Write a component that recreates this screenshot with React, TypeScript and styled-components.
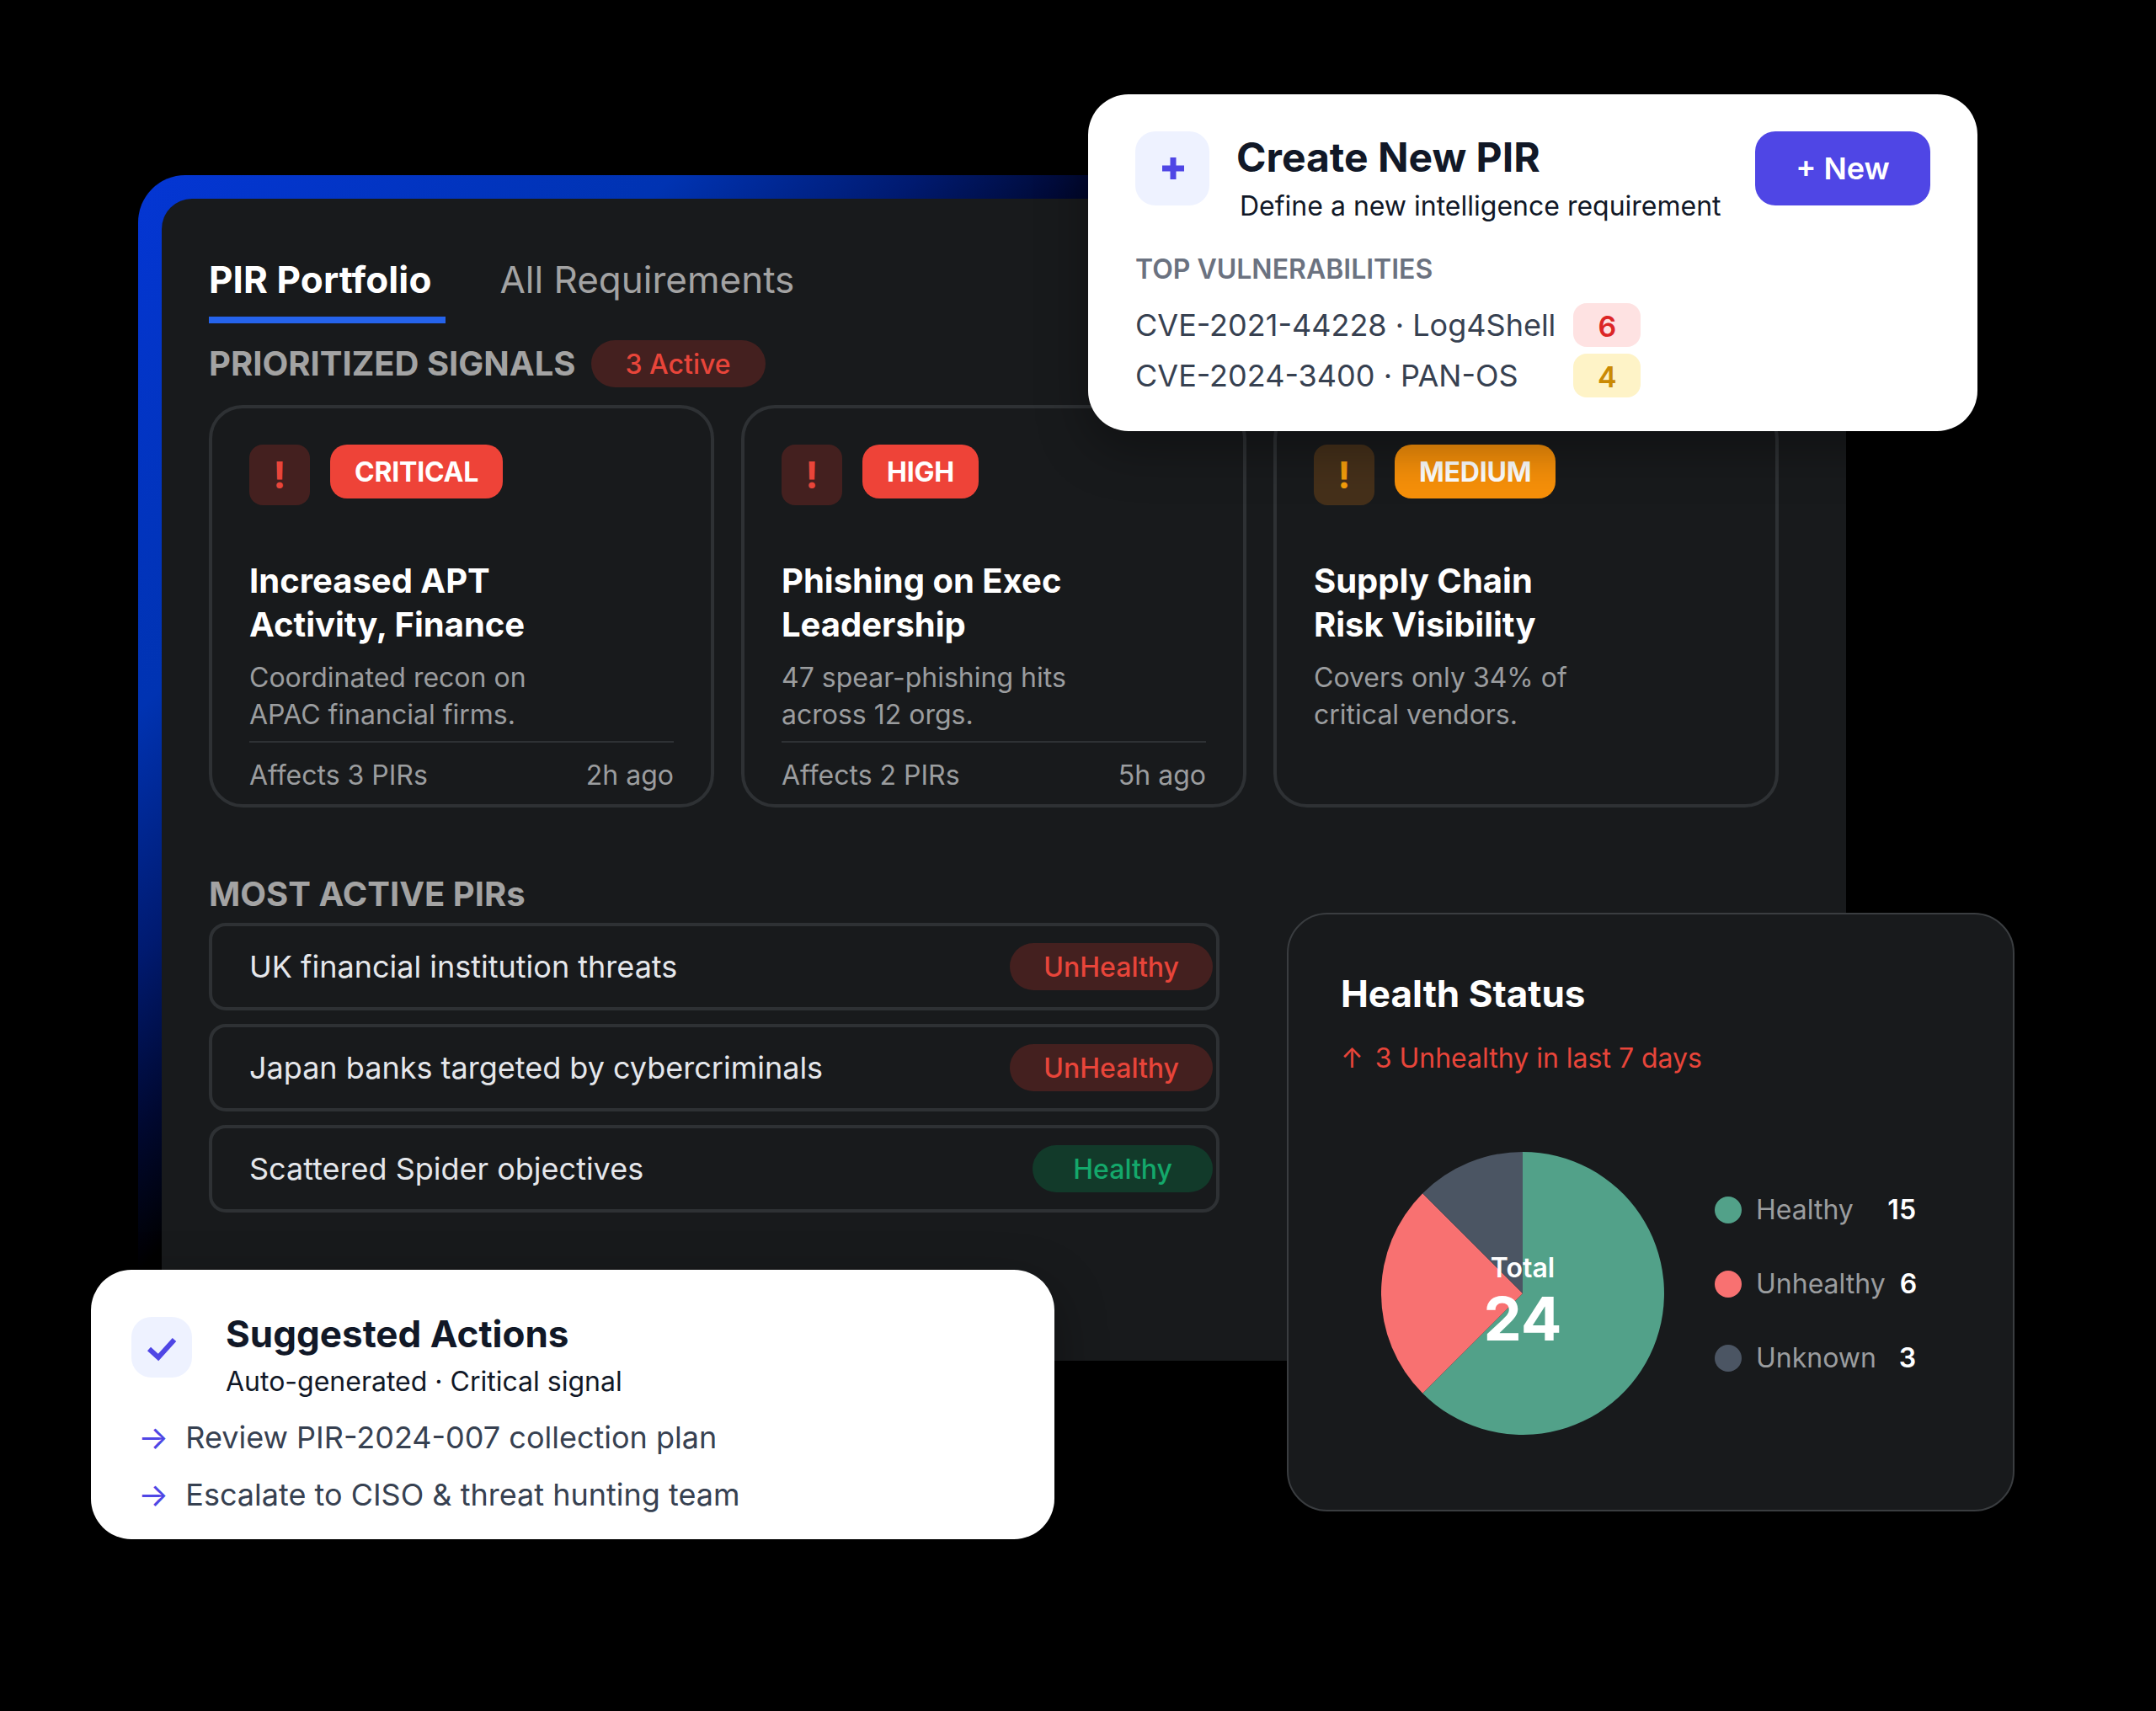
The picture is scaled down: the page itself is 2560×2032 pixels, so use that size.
import styled, { createGlobalStyle } from 'styled-components';

const GlobalStyle = createGlobalStyle`
  html, body { margin: 0; padding: 0; background: #000; }
  body { font-family: Inter, "Liberation Sans", sans-serif; }
`

type Tone = 'red' | 'orange' | 'green';

const toneText: Record<Tone, string> = { red: '#e8453a', orange: '#f59e0b', green: '#14a86b' };
const toneBadge: Record<Tone, string> = { red: '#ee4338', orange: '#f79009', green: '#14a86b' };
const toneIcon: Record<Tone, string> = { red: '#44201f', orange: '#45301a', green: '#123a2a' };

const Stage = styled.div`
  position: relative;
  width: 2560px;
  height: 2032px;
  padding: 208px 0 0 164px;
  box-sizing: border-box;
  background: #000;
  overflow: hidden;
`

const Frame = styled.div`
  width: 2028px;
  height: 1408px;
  padding: 28px 0 0 28px;
  box-sizing: border-box;
  border-radius: 56px 0 0 0;
  background: linear-gradient(135deg, #0436d4 0%, #0033b2 18.5%, #001a70 27%, #000830 33%, #000 38%);
`

const Panel = styled.div`
  height: 100%;
  padding: 69px 80px 0 56px;
  box-sizing: border-box;
  border-radius: 36px 0 0 0;
  background: #181a1c;
`

const Tabs = styled.div`
  display: flex;
  gap: 64px;
`

const Tab = styled.div<{ $active?: boolean }>`
  padding-right: ${p => (p.$active ? '17px' : '0')};
  padding-bottom: 17px;
  border-bottom: 8px solid ${p => (p.$active ? '#2563eb' : 'transparent')};
  font-size: 44px;
  line-height: 54px;
  font-weight: ${p => (p.$active ? 700 : 400)};
  letter-spacing: ${p => (p.$active ? '0.1px' : '0')};
  color: ${p => (p.$active ? '#fff' : '#a3a3a3')};
`

const SectionRow = styled.div`
  display: flex;
  align-items: center;
  gap: 18px;
  margin-top: 20px;
`

const SectionTitle = styled.div`
  font-size: 40px;
  line-height: 48px;
  font-weight: 700;
  color: #a3a3a3;
`

const ActivePill = styled.div`
  height: 56px;
  padding: 0 41px;
  display: flex;
  align-items: center;
  border-radius: 28px;
  background: #44201f;
  color: #e8453a;
  font-size: 32px;
  font-weight: 500;
`

const CardGrid = styled.div`
  display: grid;
  grid-template-columns: repeat(3, 600px);
  gap: 32px;
  margin-top: 21px;
`

const SignalCard = styled.div`
  height: 478px;
  padding: 43px 44px 0;
  box-sizing: border-box;
  border: 4px solid #2e3134;
  border-radius: 40px;
`

const CardHead = styled.div`
  display: flex;
  align-items: flex-start;
  gap: 24px;
`

const AlertIcon = styled.div<{ $tone: Tone }>`
  width: 72px;
  height: 72px;
  display: flex;
  align-items: center;
  justify-content: center;
  border-radius: 16px;
  background: ${p => toneIcon[p.$tone]};
  color: ${p => toneText[p.$tone]};
  font-size: 44px;
  font-weight: 700;
`

const Severity = styled.div<{ $tone: Tone }>`
  height: 64px;
  padding: 0 29px;
  display: flex;
  align-items: center;
  border-radius: 20px;
  background: ${p => toneBadge[p.$tone]};
  color: #fff;
  font-size: 32px;
  font-weight: 700;
  letter-spacing: -0.2px;
`

const CardTitle = styled.div`
  margin-top: 64px;
  font-size: 40px;
  line-height: 52px;
  font-weight: 700;
  color: #fff;
  white-space: pre-line;
`

const CardText = styled.div`
  margin-top: 15px;
  font-size: 32px;
  line-height: 44px;
  color: #9b9d9f;
  white-space: pre-line;
`

const CardFooter = styled.div`
  display: flex;
  justify-content: space-between;
  margin-top: 9px;
  padding-top: 17px;
  border-top: 2px solid #2e3134;
  font-size: 32px;
  line-height: 44px;
  color: #9b9d9f;
`

const ActiveTitle = styled(SectionTitle)`
  margin-top: 79px;
`

const PirList = styled.div`
  display: flex;
  flex-direction: column;
  gap: 16px;
  width: 1200px;
  margin-top: 10px;
`

const PirRow = styled.div`
  height: 104px;
  padding: 0 4px 0 44px;
  box-sizing: border-box;
  display: flex;
  align-items: center;
  justify-content: space-between;
  border: 4px solid #2e3134;
  border-radius: 20px;
  font-size: 36px;
  color: #e5e7eb;
`

const StatusPill = styled.div<{ $tone: Tone }>`
  height: 56px;
  padding: 0 ${p => (p.$tone === 'green' ? '48px' : '40px')};
  display: flex;
  align-items: center;
  border-radius: 28px;
  background: ${p => toneIcon[p.$tone]};
  color: ${p => toneText[p.$tone]};
  font-size: 32px;
  font-weight: 500;
`

const WhiteCard = styled.div`
  position: absolute;
  box-sizing: border-box;
  border-radius: 48px;
  background: #fff;
  box-shadow: 0 20px 60px rgba(0, 0, 0, 0.35);
  color: #111827;
`

const CreateCard = styled(WhiteCard)`
  left: 1292px;
  top: 112px;
  width: 1056px;
  height: 400px;
  padding: 44px 56px 40px;
`

const CreateHead = styled.div`
  display: flex;
  align-items: flex-start;
  gap: 32px;
`

const IconTile = styled.div<{ $size: number }>`
  flex: none;
  width: ${p => p.$size}px;
  height: ${p => p.$size}px;
  display: flex;
  align-items: center;
  justify-content: center;
  border-radius: 24px;
  background: #eef2ff;
`

const PlusTile = styled(IconTile)`
  padding-left: 2px;
  box-sizing: border-box;
`

const CreateText = styled.div`
  flex: 1;
  padding-top: 5px;
`

const CardHeading = styled.div`
  font-size: 48px;
  line-height: 52px;
  font-weight: 700;
  color: #111827;
`

const CreateSub = styled.div`
  margin: 10px 0 0 4px;
  font-size: 32px;
  line-height: 44px;
  white-space: nowrap;
`

const NewButton = styled.div`
  flex: none;
  width: 208px;
  height: 88px;
  display: flex;
  align-items: center;
  justify-content: center;
  border-radius: 24px;
  background: #4f46e5;
  color: #fff;
  font-size: 36px;
  font-weight: 600;
`

const VulnTitle = styled.div`
  margin-top: 33px;
  font-size: 32px;
  line-height: 40px;
  font-weight: 600;
  color: #6b7280;
`

const VulnGrid = styled.div`
  display: grid;
  grid-template-columns: max-content 80px;
  align-items: center;
  column-gap: 21px;
  row-gap: 8px;
  margin-top: 20px;
  font-size: 36px;
  color: #374151;
`

const CountBadge = styled.div<{ $tone: 'red' | 'yellow' }>`
  height: 52px;
  padding-top: 2px;
  box-sizing: border-box;
  display: flex;
  align-items: center;
  justify-content: center;
  border-radius: 16px;
  background: ${p => (p.$tone === 'red' ? '#fee2e2' : '#fef3c7')};
  color: ${p => (p.$tone === 'red' ? '#dc2626' : '#ca8a04')};
  font-size: 34px;
  font-weight: 600;
`

const ActionsCard = styled(WhiteCard)`
  left: 108px;
  top: 1508px;
  width: 1144px;
  height: 320px;
  padding: 52px 48px 30px;
`

const ActionsHead = styled.div`
  display: flex;
  align-items: flex-start;
  gap: 40px;
`

const ActionsIcon = styled(IconTile)`
  margin-top: 4px;
`

const ActionsHeading = styled(CardHeading)`
  font-size: 44px;
  line-height: 48px;
`

const ActionsSub = styled.div`
  margin-top: 13px;
  font-size: 32px;
  line-height: 40px;
`

const ActionList = styled.div`
  display: flex;
  flex-direction: column;
  gap: 24px;
  margin-top: 24px;
`

const ActionItem = styled.div`
  display: flex;
  align-items: center;
  gap: 20px;
  padding-left: 8px;
  font-size: 36px;
  line-height: 44px;
  color: #374151;
`

const ActionArrow = styled.span`
  font-size: 38px;
  color: #4f46e5;
`

const HealthCard = styled.div`
  position: absolute;
  left: 1528px;
  top: 1084px;
  width: 864px;
  height: 711px;
  padding: 66px 62px 0;
  box-sizing: border-box;
  border: 2px solid #3a3d40;
  border-radius: 48px;
  background: #181a1c;
`

const HealthTitle = styled.div`
  font-size: 44px;
  line-height: 56px;
  font-weight: 700;
  color: #fff;
`

const HealthTrend = styled.div`
  margin-top: 27px;
  font-size: 32px;
  line-height: 44px;
  color: #e8453a;
`

const TrendArrow = styled.span`
  margin-right: 5px;
`

const ChartRow = styled.div`
  display: flex;
  align-items: center;
  gap: 60px;
  margin: 89px 0 0 48px;
`

const PieWrap = styled.div`
  position: relative;
  width: 336px;
  height: 336px;
  flex: none;
`

const PieCenter = styled.div`
  position: absolute;
  left: 0;
  right: 0;
  top: 120px;
  text-align: center;
  color: #fff;
`

const PieLabel = styled.div`
  font-size: 32px;
  line-height: 36px;
  font-weight: 600;
`

const PieTotal = styled.div`
  font-size: 72px;
  line-height: 84px;
  font-weight: 700;
`

const Legend = styled.div`
  display: flex;
  flex-direction: column;
  gap: 44px;
  width: 239px;
  margin-bottom: 22px;
  font-size: 32px;
  line-height: 44px;
`

const LegendRow = styled.div`
  display: flex;
  align-items: center;
  gap: 17px;
`

const LegendDot = styled.div<{ $color: string }>`
  flex: none;
  width: 32px;
  height: 32px;
  border-radius: 50%;
  background: ${p => p.$color};
`

const LegendName = styled.div`
  color: #9b9d9f;
`

const LegendValue = styled.div`
  margin-left: auto;
  color: #fff;
  font-weight: 600;
`

const signals = [
  { tone: 'red' as Tone, level: 'CRITICAL', title: 'Increased APT\nActivity, Finance', text: 'Coordinated recon on\nAPAC financial firms.', affects: 'Affects 3 PIRs', age: '2h ago' },
  { tone: 'red' as Tone, level: 'HIGH', title: 'Phishing on Exec\nLeadership', text: '47 spear-phishing hits\nacross 12 orgs.', affects: 'Affects 2 PIRs', age: '5h ago' },
  { tone: 'orange' as Tone, level: 'MEDIUM', title: 'Supply Chain\nRisk Visibility', text: 'Covers only 34% of\ncritical vendors.' },
]

const pirs = [
  { name: 'UK financial institution threats', status: 'UnHealthy', tone: 'red' as Tone },
  { name: 'Japan banks targeted by cybercriminals', status: 'UnHealthy', tone: 'red' as Tone },
  { name: 'Scattered Spider objectives', status: 'Healthy', tone: 'green' as Tone },
]

const legend = [
  { name: 'Healthy', value: 15, color: '#52a189' },
  { name: 'Unhealthy', value: 6, color: '#f87171' },
  { name: 'Unknown', value: 3, color: '#4b5563' },
]

export default function App() {
  return (
    <Stage>
      <GlobalStyle />
      <Frame>
        <Panel>
          <Tabs>
            <Tab $active>PIR Portfolio</Tab>
            <Tab>All Requirements</Tab>
          </Tabs>
          <SectionRow>
            <SectionTitle>PRIORITIZED SIGNALS</SectionTitle>
            <ActivePill>3 Active</ActivePill>
          </SectionRow>
          <CardGrid>
            {signals.map(s => (
              <SignalCard key={s.level}>
                <CardHead>
                  <AlertIcon $tone={s.tone}>!</AlertIcon>
                  <Severity $tone={s.tone}>{s.level}</Severity>
                </CardHead>
                <CardTitle>{s.title}</CardTitle>
                <CardText>{s.text}</CardText>
                {s.affects && (
                  <CardFooter>
                    <span>{s.affects}</span>
                    <span>{s.age}</span>
                  </CardFooter>
                )}
              </SignalCard>
            ))}
          </CardGrid>
          <ActiveTitle>MOST ACTIVE PIRs</ActiveTitle>
          <PirList>
            {pirs.map(p => (
              <PirRow key={p.name}>
                <span>{p.name}</span>
                <StatusPill $tone={p.tone}>{p.status}</StatusPill>
              </PirRow>
            ))}
          </PirList>
        </Panel>
      </Frame>

      <CreateCard>
        <CreateHead>
          <PlusTile $size={88}>
            <svg width="28" height="28" viewBox="0 0 28 28">
              <path d="M14 1v26M1 14h26" stroke="#4f46e5" strokeWidth="7" fill="none" />
            </svg>
          </PlusTile>
          <CreateText>
            <CardHeading>Create New PIR</CardHeading>
            <CreateSub>Define a new intelligence requirement</CreateSub>
          </CreateText>
          <NewButton>+ New</NewButton>
        </CreateHead>
        <VulnTitle>TOP VULNERABILITIES</VulnTitle>
        <VulnGrid>
          <span>CVE-2021-44228 · Log4Shell</span>
          <CountBadge $tone="red">6</CountBadge>
          <span>CVE-2024-3400 · PAN-OS</span>
          <CountBadge $tone="yellow">4</CountBadge>
        </VulnGrid>
      </CreateCard>

      <ActionsCard>
        <ActionsHead>
          <ActionsIcon $size={72}>
            <svg width="40" height="40" viewBox="0 0 40 40">
              <path d="M5 22l11 10L35 11" stroke="#4f46e5" strokeWidth="6" fill="none" />
            </svg>
          </ActionsIcon>
          <div>
            <ActionsHeading>Suggested Actions</ActionsHeading>
            <ActionsSub>Auto-generated · Critical signal</ActionsSub>
          </div>
        </ActionsHead>
        <ActionList>
          <ActionItem><ActionArrow>→</ActionArrow>Review PIR-2024-007 collection plan</ActionItem>
          <ActionItem><ActionArrow>→</ActionArrow>Escalate to CISO & threat hunting team</ActionItem>
        </ActionList>
      </ActionsCard>

      <HealthCard>
        <HealthTitle>Health Status</HealthTitle>
        <HealthTrend><TrendArrow>↑</TrendArrow> 3 Unhealthy in last 7 days</HealthTrend>
        <ChartRow>
          <PieWrap>
            <svg width="336" height="336" viewBox="0 0 336 336">
              <path d="M168 168V0A168 168 0 1 1 49.2 286.8Z" fill="#52a189" />
              <path d="M168 168L49.2 286.8A168 168 0 0 1 49.2 49.2Z" fill="#f87171" />
              <path d="M168 168L49.2 49.2A168 168 0 0 1 168 0Z" fill="#4b5563" />
            </svg>
            <PieCenter>
              <PieLabel>Total</PieLabel>
              <PieTotal>24</PieTotal>
            </PieCenter>
          </PieWrap>
          <Legend>
            {legend.map(l => (
              <LegendRow key={l.name}>
                <LegendDot $color={l.color} />
                <LegendName>{l.name}</LegendName>
                <LegendValue>{l.value}</LegendValue>
              </LegendRow>
            ))}
          </Legend>
        </ChartRow>
      </HealthCard>
    </Stage>
  )
}
